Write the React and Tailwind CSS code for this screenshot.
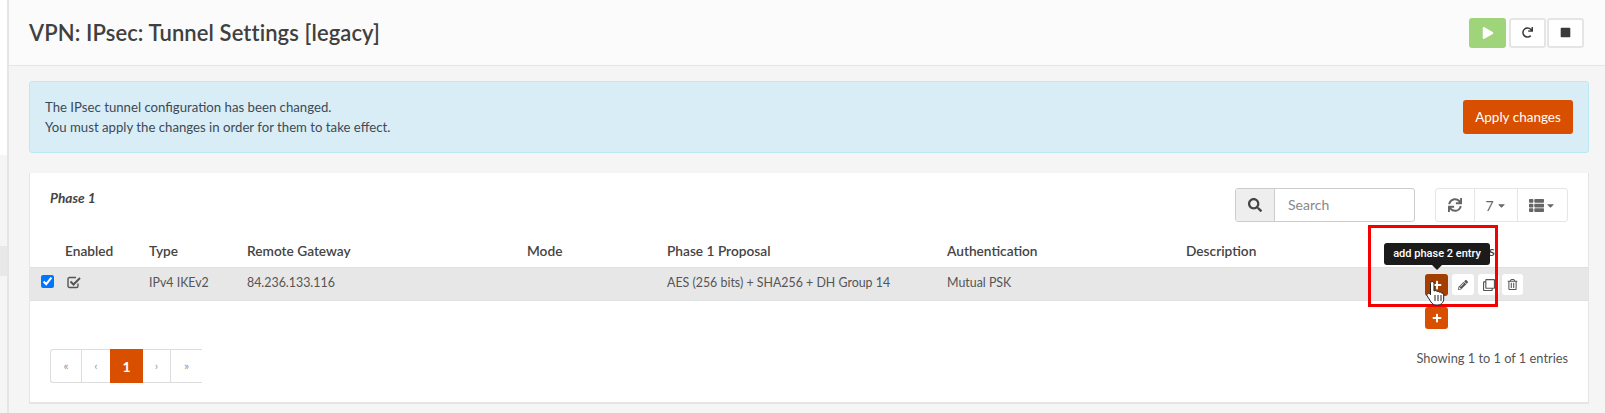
import React from "react";
import { FaPlay, FaRedo, FaStop, FaSearch, FaSync, FaThList, FaPlus, FaPencilAlt, FaRegClone, FaRegTrashAlt, FaCaretDown } from "react-icons/fa";

const cols = "grid grid-cols-[24px_84px_98px_280px_140px_280px_239px_241px_1fr] pl-[11px]";

function Small({ children, className = "" }) {
  return <span className={`flex h-[21px] shrink-0 items-center justify-center rounded-[3px] bg-white text-[#555] ${className}`}>{children}</span>;
}

export default function App() {
  return (
    <div className="flex h-[413px] w-[1605px] overflow-hidden bg-[#f5f5f5] font-['Lato','Noto_Sans',sans-serif] text-[14px] text-[#444]">
      <aside className="flex w-[9px] shrink-0 flex-col border-r-2 border-[#e5e5e5]">
        <div className="h-[155px] bg-white" />
        <div className="mt-[91px] h-[30px] bg-[#e8e8e8]" />
      </aside>
      <main className="min-w-0 flex-1">
        <header className="flex h-[66px] items-center justify-between border-b border-[#e5e5e5] bg-[#fbfbfb] pl-[20px] pr-[21px]">
          <h1 className="text-[22px] font-semibold tracking-[0.1px] text-[#404040]">VPN: IPsec: Tunnel Settings [legacy]</h1>
          <div className="flex gap-[1px]">
            <button className="mr-[2px] flex h-[30px] w-[37px] items-center justify-center rounded-[3px] bg-[#a0d47a] text-[12px] text-white"><FaPlay /></button>
            <button className="flex h-[30px] w-[37px] items-center justify-center rounded-[3px] border-2 border-[#e5e5e5] bg-white text-[11px] text-[#3a3a3a]"><FaRedo /></button>
            <button className="flex h-[30px] w-[37px] items-center justify-center rounded-[3px] border-2 border-[#e5e5e5] bg-white text-[11px] text-[#3a3a3a]"><FaStop /></button>
          </div>
        </header>

        <div className="pl-[20px] pr-[16px] pt-[15px]">
          <section className="flex h-[72px] items-center justify-between rounded-[3px] border border-[#bce8f1] bg-[#d9edf7] pl-[15px] pr-[15px]">
            <p className="text-[13.2px] leading-[20px] text-[#3c4a55]">
              The IPsec tunnel configuration has been changed.<br />
              You must apply the changes in order for them to take effect.
            </p>
            <button className="h-[34px] w-[110px] rounded-[3px] bg-[#d94f00] text-[13.5px] text-white">Apply changes</button>
          </section>

          <section className="mt-[20px] h-[231px] border-x border-b-2 border-[#e5e5e5] bg-white">
            <div className="flex h-[48px] items-start justify-between pl-[20px] pr-[20px] pt-[15px]">
              <em className="text-[13.7px] font-bold text-[#444]">Phase 1</em>
              <div className="flex">
                <div className="mr-[20px] flex h-[34px] w-[180px] overflow-hidden rounded-[3px] border border-[#ccc]">
                  <span className="flex w-[39px] items-center justify-center border-r border-[#ccc] bg-[#eee] text-[14px] text-[#444]"><FaSearch /></span>
                  <span className="flex flex-1 items-center pb-[2px] pl-[13px] text-[14px] text-[#888]">Search</span>
                </div>
                <div className="flex h-[34px] w-[133px] rounded-[3px] border border-[#e5e5e5] text-[#666]">
                  <span className="flex w-[39px] items-center justify-center border-r border-[#e5e5e5] text-[14px]"><FaSync /></span>
                  <span className="flex w-[43px] items-center justify-center gap-[2px] border-r border-[#e5e5e5] text-[14px]">7<FaCaretDown className="text-[11px]" /></span>
                  <span className="flex flex-1 items-center justify-center gap-[1px] text-[15px]"><FaThList /><FaCaretDown className="text-[11px]" /></span>
                </div>
              </div>
            </div>

            <div className={`${cols} h-[46px] items-end pb-[5px] text-[13.7px] font-semibold text-[#444]`}>
              <span />
              <span>Enabled</span>
              <span>Type</span>
              <span>Remote Gateway</span>
              <span>Mode</span>
              <span>Phase 1 Proposal</span>
              <span>Authentication</span>
              <span>Description</span>
              <span className="whitespace-nowrap">Commands</span>
            </div>

            <div className={`${cols} h-[34px] border-y border-[#e0e0e0] bg-[#e7e7e7] text-[12.4px] text-[#555]`}>
              <span className="pt-[7px]"><input type="checkbox" defaultChecked readOnly className="block h-[13px] w-[13px] accent-[#0075ff]" /></span>
              <span className="pl-[2px] pt-[8px]">
                <svg width="14" height="13" viewBox="0 0 14 13" className="block">
                  <path d="M11 7.500V10a1.500 1.500 0 0 1-1.500 1.500h-7A1.500 1.500 0 0 1 1 10V3a1.500 1.500 0 0 1 1.500-1.500H9" fill="none" stroke="#555" strokeWidth="1.400" />
                  <path d="M3.500 5.500L6.500 8.500L13 2" fill="none" stroke="#555" strokeWidth="2" />
                </svg>
              </span>
              <span className="flex items-center pb-[1px]">IPv4 IKEv2</span>
              <span className="flex items-center pb-[1px]">84.236.133.116</span>
              <span />
              <span className="flex items-center whitespace-nowrap pb-[1px]">AES (256 bits) + SHA256 + DH Group 14</span>
              <span className="flex items-center pb-[1px]">Mutual PSK</span>
              <span />
              <div className="-ml-[2px] flex items-center gap-[4px] pt-[1px]">
                <span className="flex h-[22px] w-[23px] shrink-0 items-center justify-center rounded-[3px] bg-[#a33e00] text-[10px] text-white"><FaPlus /></span>
                <Small className="w-[22px] text-[10px]"><FaPencilAlt /></Small>
                <Small className="w-[21px] text-[12px]"><FaRegClone /></Small>
                <Small className="-ml-[1px] w-[21px] text-[11px]"><FaRegTrashAlt /></Small>
              </div>
            </div>

            <div className="flex h-[28px] items-end justify-end pr-[140px]">
              <span className="flex h-[22px] w-[23px] items-center justify-center rounded-[3px] bg-[#d94f00] text-[10px] text-white"><FaPlus /></span>
            </div>

            <div className="flex items-center justify-between pl-[20px] pr-[20px] pt-[20px]">
              <nav className="flex h-[34px] items-stretch rounded-l-[3px] border-y border-l border-[#ddd] text-[12px] text-[#999]">
                <span className="flex w-[31px] items-center justify-center border-r border-[#ddd]">«</span>
                <span className="flex w-[28px] items-center justify-center">‹</span>
                <span className="-my-px flex w-[33px] items-center justify-center bg-[#d94f00] text-[14px] font-bold text-white">1</span>
                <span className="flex w-[28px] items-center justify-center border-r border-[#ddd]">›</span>
                <span className="flex w-[31px] items-center justify-center">»</span>
              </nav>
              <span className="-mt-[14px] text-[12.8px] text-[#555]">Showing 1 to 1 of 1 entries</span>
            </div>
          </section>
        </div>
      </main>

      <div className="absolute left-[1384px] top-[243px] flex h-[22px] w-[106px] items-center justify-center rounded-[3px] bg-[#1b1b1b] font-['Roboto',sans-serif] text-[11px] font-medium text-white">
        add phase 2 entry
        <span className="absolute -bottom-[5px] left-[48px] h-0 w-0 border-x-[5px] border-t-[5px] border-x-transparent border-t-[#1b1b1b]" />
      </div>
      <div className="pointer-events-none absolute left-[1368px] top-[225px] h-[82px] w-[130px] border-[3px] border-[#f50000]" />
      <div className="absolute left-[1426px] top-[280px]">
        <svg width="20" height="26" viewBox="0 0 20 26">
          <path d="M6 1.5c1.2 0 2 .9 2 2V11l1-.4c.9-.2 1.6.2 2 .9.9-.4 1.9-.1 2.3.7 1-.4 2 0 2.4 1 1-.2 2 .6 2 1.8v4c0 3-2.2 6-5.800 6H10c-2.500 0-3.800-1.200-5-3L1.200 16c-.6-1-.3-2 .5-2.500.8-.5 1.800-.2 2.300.5l.5.700V3.500c0-1.100.7-2 1.500-2z" fill="#fff" stroke="#222" strokeWidth="1" />
          <path d="M9 15v6M12 15v6M15 15v6" fill="none" stroke="#222" strokeWidth="1" />
        </svg>
      </div>
    </div>
  );
}
